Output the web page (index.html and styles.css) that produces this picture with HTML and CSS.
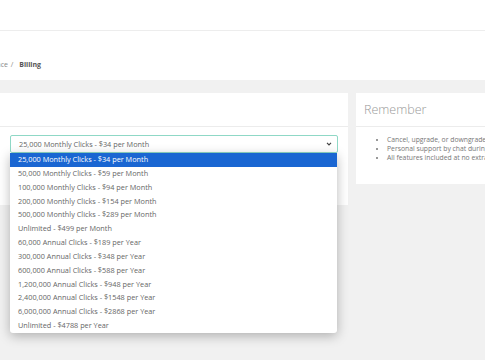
FILE: index.html
```html
<!DOCTYPE html>
<html lang="en">
<head>
    <meta charset="UTF-8">
    <title>Billing</title>
    <link rel="stylesheet" href="styles.css">
</head>
<body>
    <!-- Top bar -->
    <div class="topbar"></div>

    <!-- Page heading with breadcrumb -->
    <div class="page-head">
        <div class="breadcrumb">
            <span class="crumb">Workspace</span>
            <span class="sep">/</span>
            <span class="crumb-current">Billing</span>
        </div>
    </div>

    <div class="content">
        <!-- Plan card -->
        <div class="card plan-card">
            <div class="card-head"></div>
            <div class="card-body">
                <div class="select-wrap">
                    <div class="plan-select">
                        <span>25,000 Monthly Clicks - $34 per Month</span>
                        <svg class="chevron" width="6" height="4" viewBox="0 0 6 4">
                            <path d="M1 0.8l2 2 2-2" fill="none" stroke="#444" stroke-width="1.2"/>
                        </svg>
                    </div>
                    <!-- Open option list -->
                    <div class="plan-options">
                        <div class="option selected">25,000 Monthly Clicks - $34 per Month</div>
                        <div class="option">50,000 Monthly Clicks - $59 per Month</div>
                        <div class="option">100,000 Monthly Clicks - $94 per Month</div>
                        <div class="option">200,000 Monthly Clicks - $154 per Month</div>
                        <div class="option">500,000 Monthly Clicks - $289 per Month</div>
                        <div class="option">Unlimited - $499 per Month</div>
                        <div class="option">60,000 Annual Clicks - $189 per Year</div>
                        <div class="option">300,000 Annual Clicks - $348 per Year</div>
                        <div class="option">600,000 Annual Clicks - $588 per Year</div>
                        <div class="option">1,200,000 Annual Clicks - $948 per Year</div>
                        <div class="option">2,400,000 Annual Clicks - $1548 per Year</div>
                        <div class="option">6,000,000 Annual Clicks - $2868 per Year</div>
                        <div class="option">Unlimited - $4788 per Year</div>
                    </div>
                </div>
            </div>
        </div>

        <!-- Remember card -->
        <div class="card remember-card">
            <div class="card-head">
                <h3>Remember</h3>
            </div>
            <ul class="remember-list">
                <li>Cancel, upgrade, or downgrade anytime</li>
                <li>Personal support by chat during business hours</li>
                <li>All features included at no extra cost</li>
            </ul>
        </div>
    </div>
</body>
</html>
```

FILE: styles.css
```css
html, body {
    margin: 0;
    padding: 0;
    height: 100%;
    overflow: hidden;
}

body {
    background: #f1f1f1;
    font-family: "Open Sans", "Liberation Sans", sans-serif;
    color: #666;
}

/* Top bar */
.topbar {
    height: 30px;
    background: #fff;
    border-bottom: 1px solid #ededed;
}

/* Page heading */
.page-head {
    height: 49px;
    background: #fff;
    box-sizing: border-box;
    padding-top: 29px;
}

.breadcrumb {
    margin-left: -28px; /* page is scrolled sideways */
    font-size: 7px;
    color: #888;
    white-space: nowrap;
}

.sep {
    margin: 0 4px 0 1px;
}

.crumb-current {
    font-weight: 700;
    color: #555;
}

/* Cards */
.content {
    display: grid;
    grid-template-columns: 348px 160px;
    column-gap: 8px;
    align-items: start;
    padding-top: 13px;
}

.card {
    background: #fff;
}

.card-head {
    height: 34px;
    border-bottom: 1px solid #ececec;
    box-sizing: border-box;
}

.plan-card {
    height: 112px;
}

.card-body {
    padding: 8px 10px 0 10px;
}

.select-wrap {
    position: relative;
    width: 328px;
}

.plan-select {
    height: 18px;
    box-sizing: border-box;
    border: 1px solid #8fd8c6;
    border-radius: 2px;
    display: flex;
    align-items: center;
    justify-content: space-between;
    padding: 0 5px 0 8px;
    font-size: 7.3px;
    color: #666;
}

.chevron {
    display: block;
}

/* Option list drawn open over the page */
.plan-options {
    position: absolute;
    top: 18px;
    left: 0;
    width: 327px;
    background: #fff;
    border-radius: 0 0 3px 3px;
    box-shadow: 0 3px 12px rgba(0, 0, 0, 0.28);
    z-index: 10;
}

.option {
    height: 13.85px;
    line-height: 13.85px;
    padding-left: 8px;
    font-size: 7.3px;
    color: #666;
    white-space: nowrap;
}

.option.selected {
    background: #1a66d2;
    color: #fff;
}

/* Remember card */
.remember-card {
    height: 91px;
}

.remember-card h3 {
    margin: 0;
    padding: 8px 0 0 8px;
    font-size: 12.5px;
    font-weight: 300;
    color: #999;
    line-height: 18px;
}

.remember-list {
    margin: 0;
    padding: 8px 0 0 31px;
    font-size: 6.8px;
    line-height: 9px;
    color: #777;
    white-space: nowrap;
}
```
